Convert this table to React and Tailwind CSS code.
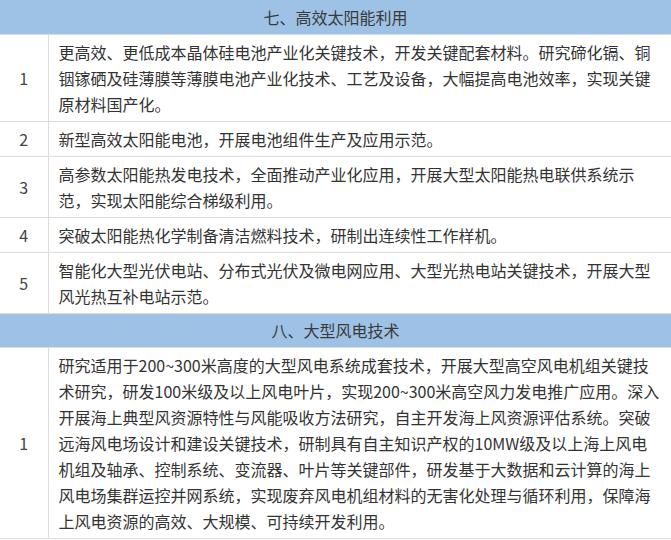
const solar = [
  ['1', '更高效、更低成本晶体硅电池产业化关键技术，开发关键配套材料。研究碲化镉、铜铟镓硒及硅薄膜等薄膜电池产业化技术、工艺及设备，大幅提高电池效率，实现关键原材料国产化。'],
  ['2', '新型高效太阳能电池，开展电池组件生产及应用示范。'],
  ['3', '高参数太阳能热发电技术，全面推动产业化应用，开展大型太阳能热电联供系统示范，实现太阳能综合梯级利用。'],
  ['4', '突破太阳能热化学制备清洁燃料技术，研制出连续性工作样机。'],
  ['5', '智能化大型光伏电站、分布式光伏及微电网应用、大型光热电站关键技术，开展大型风光热互补电站示范。'],
];

const wind = [
  ['1', '研究适用于200~300米高度的大型风电系统成套技术，开展大型高空风电机组关键技术研究，研发100米级及以上风电叶片，实现200~300米高空风力发电推广应用。深入开展海上典型风资源特性与风能吸收方法研究，自主开发海上风资源评估系统。突破远海风电场设计和建设关键技术，研制具有自主知识产权的10MW级及以上海上风电机组及轴承、控制系统、变流器、叶片等关键部件，研发基于大数据和云计算的海上风电场集群运控并网系统，实现废弃风电机组材料的无害化处理与循环利用，保障海上风电资源的高效、大规模、可持续开发利用。'],
];

function Section({ title, rows }) {
  return (
    <>
      <tr>
        <td colSpan={2} className="h-[34px] bg-[#9dc2e6] text-center text-[16px] text-[#3a3a3a] border-b border-[#dcdcdc] p-0">
          {title}
        </td>
      </tr>
      {rows.map(([n, text]) => (
        <tr key={title + n}>
          <td className="w-[48px] border-r border-b border-[#dcdcdc] text-center align-middle text-[16px] text-[#444] p-0">{n}</td>
          <td className="border-b border-[#dcdcdc] pl-[10px] pr-[10px] py-1 text-[16px] leading-[26px] text-[#333]">{text}</td>
        </tr>
      ))}
    </>
  );
}

export default function App() {
  return (
    <div className="w-[671px] h-[540px] overflow-hidden bg-white" style={{ fontFamily: '"Noto Sans CJK SC", "Noto Sans", sans-serif' }}>
      <table className="w-[671px] border-collapse table-fixed">
        <colgroup>
          <col className="w-[48px]" />
          <col />
        </colgroup>
        <tbody>
          <Section title="七、高效太阳能利用" rows={solar} />
          <Section title="八、大型风电技术" rows={wind} />
        </tbody>
      </table>
    </div>
  );
}
